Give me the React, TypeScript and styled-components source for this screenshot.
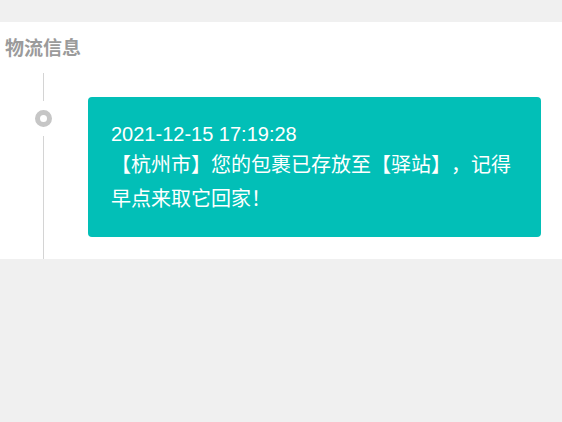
import React from "react";
import styled, { createGlobalStyle } from "styled-components";

const Global = createGlobalStyle`
  html, body {
    margin: 0;
    padding: 0;
    background: #f0f0f0;
    font-family: "Liberation Sans", "Noto Sans CJK SC", sans-serif;
  }
`;

const Page = styled.div`
  padding-top: 22px;
`;

const Panel = styled.section`
  background: #ffffff;
  padding-top: 14px;
`;

const Title = styled.h2`
  margin: 0 0 11px 0;
  padding-left: 5px;
  font-size: 19px;
  line-height: 26px;
  font-weight: bold;
  color: #9b9b9b;
`;

const Row = styled.div`
  display: flex;
  gap: 2px;
`;

const Axis = styled.div`
  width: 86px;
  flex: none;
  display: flex;
  flex-direction: column;
  align-items: center;
`;

const Segment = styled.div<{ $grow?: boolean; $h?: number }>`
  width: 1px;
  background: #d4d4d4;
  height: ${(p) => (p.$h ? `${p.$h}px` : "auto")};
  flex: ${(p) => (p.$grow ? 1 : "none")};
`;

const Dot = styled.div`
  width: 17px;
  height: 17px;
  box-sizing: border-box;
  border-radius: 50%;
  border: 5px solid #c6c6c6;
  background: #fff;
  margin: 9px 0;
  flex: none;
`;

const Card = styled.div`
  flex: 1;
  margin: 24px 21px 22px 0;
  background: #02bfb7;
  border-radius: 4px;
  color: #ffffff;
  padding: 23px 23px 21px 23px;
  font-size: 20px;
  text-spacing-trim: space-all;
`;

const Time = styled.div`
  line-height: 28px;
`;

const Message = styled.div`
  line-height: 34px;
`;

export default function App() {
  return (
    <>
      <Global />
      <Page>
        <Panel>
          <Title>物流信息</Title>
          <Row>
            <Axis>
              <Segment $h={28} />
              <Dot />
              <Segment $grow />
            </Axis>
            <Card>
              <Time>2021-12-15 17:19:28</Time>
              <Message>【杭州市】您的包裹已存放至【驿站】，记得早点来取它回家！</Message>
            </Card>
          </Row>
        </Panel>
      </Page>
    </>
  );
}
